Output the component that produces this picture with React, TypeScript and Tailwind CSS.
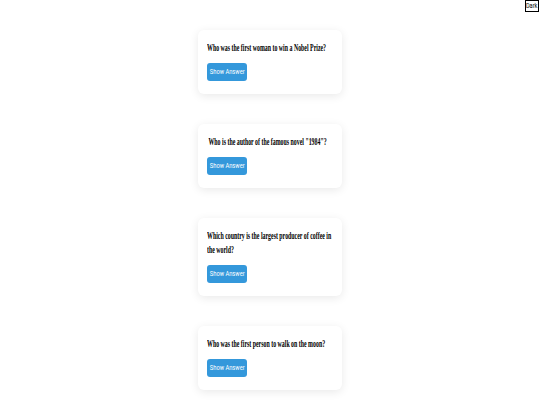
const questions = [
  "Who was the first woman to win a Nobel Prize?",
  "\u00a0Who is the author of the famous novel \"1984\"?",
  "Which country is the largest producer of coffee in the world?",
  "Who was the first person to walk on the moon?",
];

function QuestionCard({ text }: { text: string }) {
  return (
    <div className="mb-[30px] w-[144px] rounded-[6px] bg-white px-[9px] pt-[11px] pb-[13px] shadow-[0_2px_10px_rgba(0,0,0,0.09)]">
      <div className="w-[126px]">
        <h3 className="w-[226px] origin-top-left scale-x-[0.56] font-['Liberation_Serif',serif] text-[10.5px] leading-[14px] font-bold text-black">
          {text}
        </h3>
      </div>
      <button className="mt-[8px] flex h-[18px] w-[40px] items-center justify-center rounded-[3px] bg-[#3498db] text-white">
        <span className="scale-x-[0.72] font-['Roboto',sans-serif] text-[8px] leading-none whitespace-nowrap">
          Show Answer
        </span>
      </button>
    </div>
  );
}

export default function App() {
  return (
    <div className="relative min-h-[405px] bg-white">
      <button className="absolute top-0 right-[1px] flex h-[12px] w-[14px] items-center justify-center border border-black bg-white">
        <span className="scale-x-[0.75] font-['Roboto',sans-serif] text-[7.5px] leading-none text-black">
          Dark
        </span>
      </button>
      <div className="flex flex-col items-center pt-[30px]">
        {questions.map((q) => (
          <QuestionCard key={q} text={q} />
        ))}
      </div>
    </div>
  );
}
